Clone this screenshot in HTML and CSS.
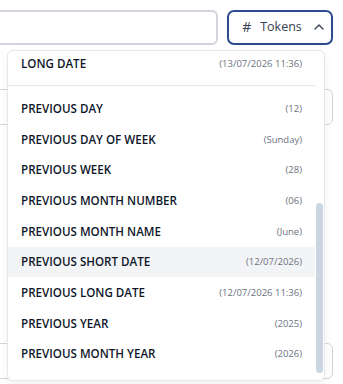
FILE: index.html
```html
<!DOCTYPE html>
<html lang="en">
<head>
    <meta charset="UTF-8">
    <meta name="viewport" content="width=device-width, initial-scale=1.0">
    <title>Tokens</title>
    <link rel="stylesheet" href="styles.css">
</head>
<body>
    <div class="page">
        <div class="toolbar">
            <div class="field"></div>
            <button class="tokens-btn">
                <span class="hash">#</span>
                <span>Tokens</span>
                <svg class="caret" width="10" height="6" viewBox="0 0 10 6">
                    <path d="M1 5 L5 1 L9 5" fill="none" stroke="#374151" stroke-width="1.4" stroke-linecap="round" stroke-linejoin="round"/>
                </svg>
            </button>
        </div>
        <div class="field wide first"></div>
        <div class="field wide second"></div>

        <div class="menu">
            <div class="list">
                <div class="item"><span class="label">LONG DATE</span><span class="value">(13/07/2026 11:36)</span></div>
                <div class="divider"></div>
                <div class="item"><span class="label">PREVIOUS DAY</span><span class="value">(12)</span></div>
                <div class="item"><span class="label">PREVIOUS DAY OF WEEK</span><span class="value">(Sunday)</span></div>
                <div class="item"><span class="label">PREVIOUS WEEK</span><span class="value">(28)</span></div>
                <div class="item"><span class="label">PREVIOUS MONTH NUMBER</span><span class="value">(06)</span></div>
                <div class="item"><span class="label">PREVIOUS MONTH NAME</span><span class="value">(June)</span></div>
                <div class="item active"><span class="label">PREVIOUS SHORT DATE</span><span class="value">(12/07/2026)</span></div>
                <div class="item"><span class="label">PREVIOUS LONG DATE</span><span class="value">(12/07/2026 11:36)</span></div>
                <div class="item"><span class="label">PREVIOUS YEAR</span><span class="value">(2025)</span></div>
                <div class="item"><span class="label">PREVIOUS MONTH YEAR</span><span class="value">(2026)</span></div>
            </div>
            <div class="track"><div class="thumb"></div></div>
        </div>
    </div>
</body>
</html>
```

FILE: styles.css
```css
body {
    margin: 0;
    background: #fff;
    font-family: "Open Sans", "Noto Sans", Arial, sans-serif;
    color: #111827;
    overflow: hidden;
}
.page {
    position: relative;
    height: 384px;
    padding: 10px 10px 0 0;
    box-sizing: border-box;
}
.toolbar {
    display: flex;
    gap: 9px;
    height: 35px;
}
.field {
    flex: 1;
    margin-left: -20px;
    border: 2px solid #d1d5db;
    border-radius: 6px;
}
.field.wide {
    height: 36px;
    box-sizing: border-box;
    border-width: 1.5px;
}
.field.first {
    margin-top: 44px;
}
.field.second {
    margin-top: 218px;
}
.tokens-btn {
    width: 106px;
    height: 35px;
    border: 2px solid #2f4a8e;
    border-radius: 7px;
    background: #fff;
    display: flex;
    align-items: center;
    justify-content: center;
    gap: 9px;
    font-family: inherit;
    font-size: 12.5px;
    font-weight: 500;
    color: #374151;
    padding: 0 0 2px 6px;
}
.hash {
    font-size: 14px;
    font-weight: 400;
}
.caret {
    margin-left: 3px;
}
.menu {
    position: absolute;
    left: 7px;
    top: 50px;
    width: 318px;
    height: 331px;
    box-sizing: border-box;
    background: #fff;
    border: 1px solid #e5e7eb;
    border-radius: 6px;
    box-shadow: 0 4px 10px rgba(0, 0, 0, 0.06);
    display: flex;
    overflow: hidden;
}
.list {
    flex: 1;
    margin-top: -3.33px;
}
.item {
    height: 30.67px;
    display: flex;
    align-items: center;
    justify-content: space-between;
    padding: 0 13px;
}
.item.active {
    background: #f3f4f6;
}
.label {
    font-size: 11.6px;
    font-weight: 600;
    color: #0f172a;
}
.value {
    font-size: 9.5px;
    color: #6b7280;
}
.divider {
    height: 1px;
    background: #e5e7eb;
    margin: 7px 0;
}
.track {
    width: 9px;
}
.thumb {
    width: 7px;
    margin: 152px 0 0 1px;
    height: 170px;
    border-radius: 4px;
    background: #cbd5e1;
}
```
